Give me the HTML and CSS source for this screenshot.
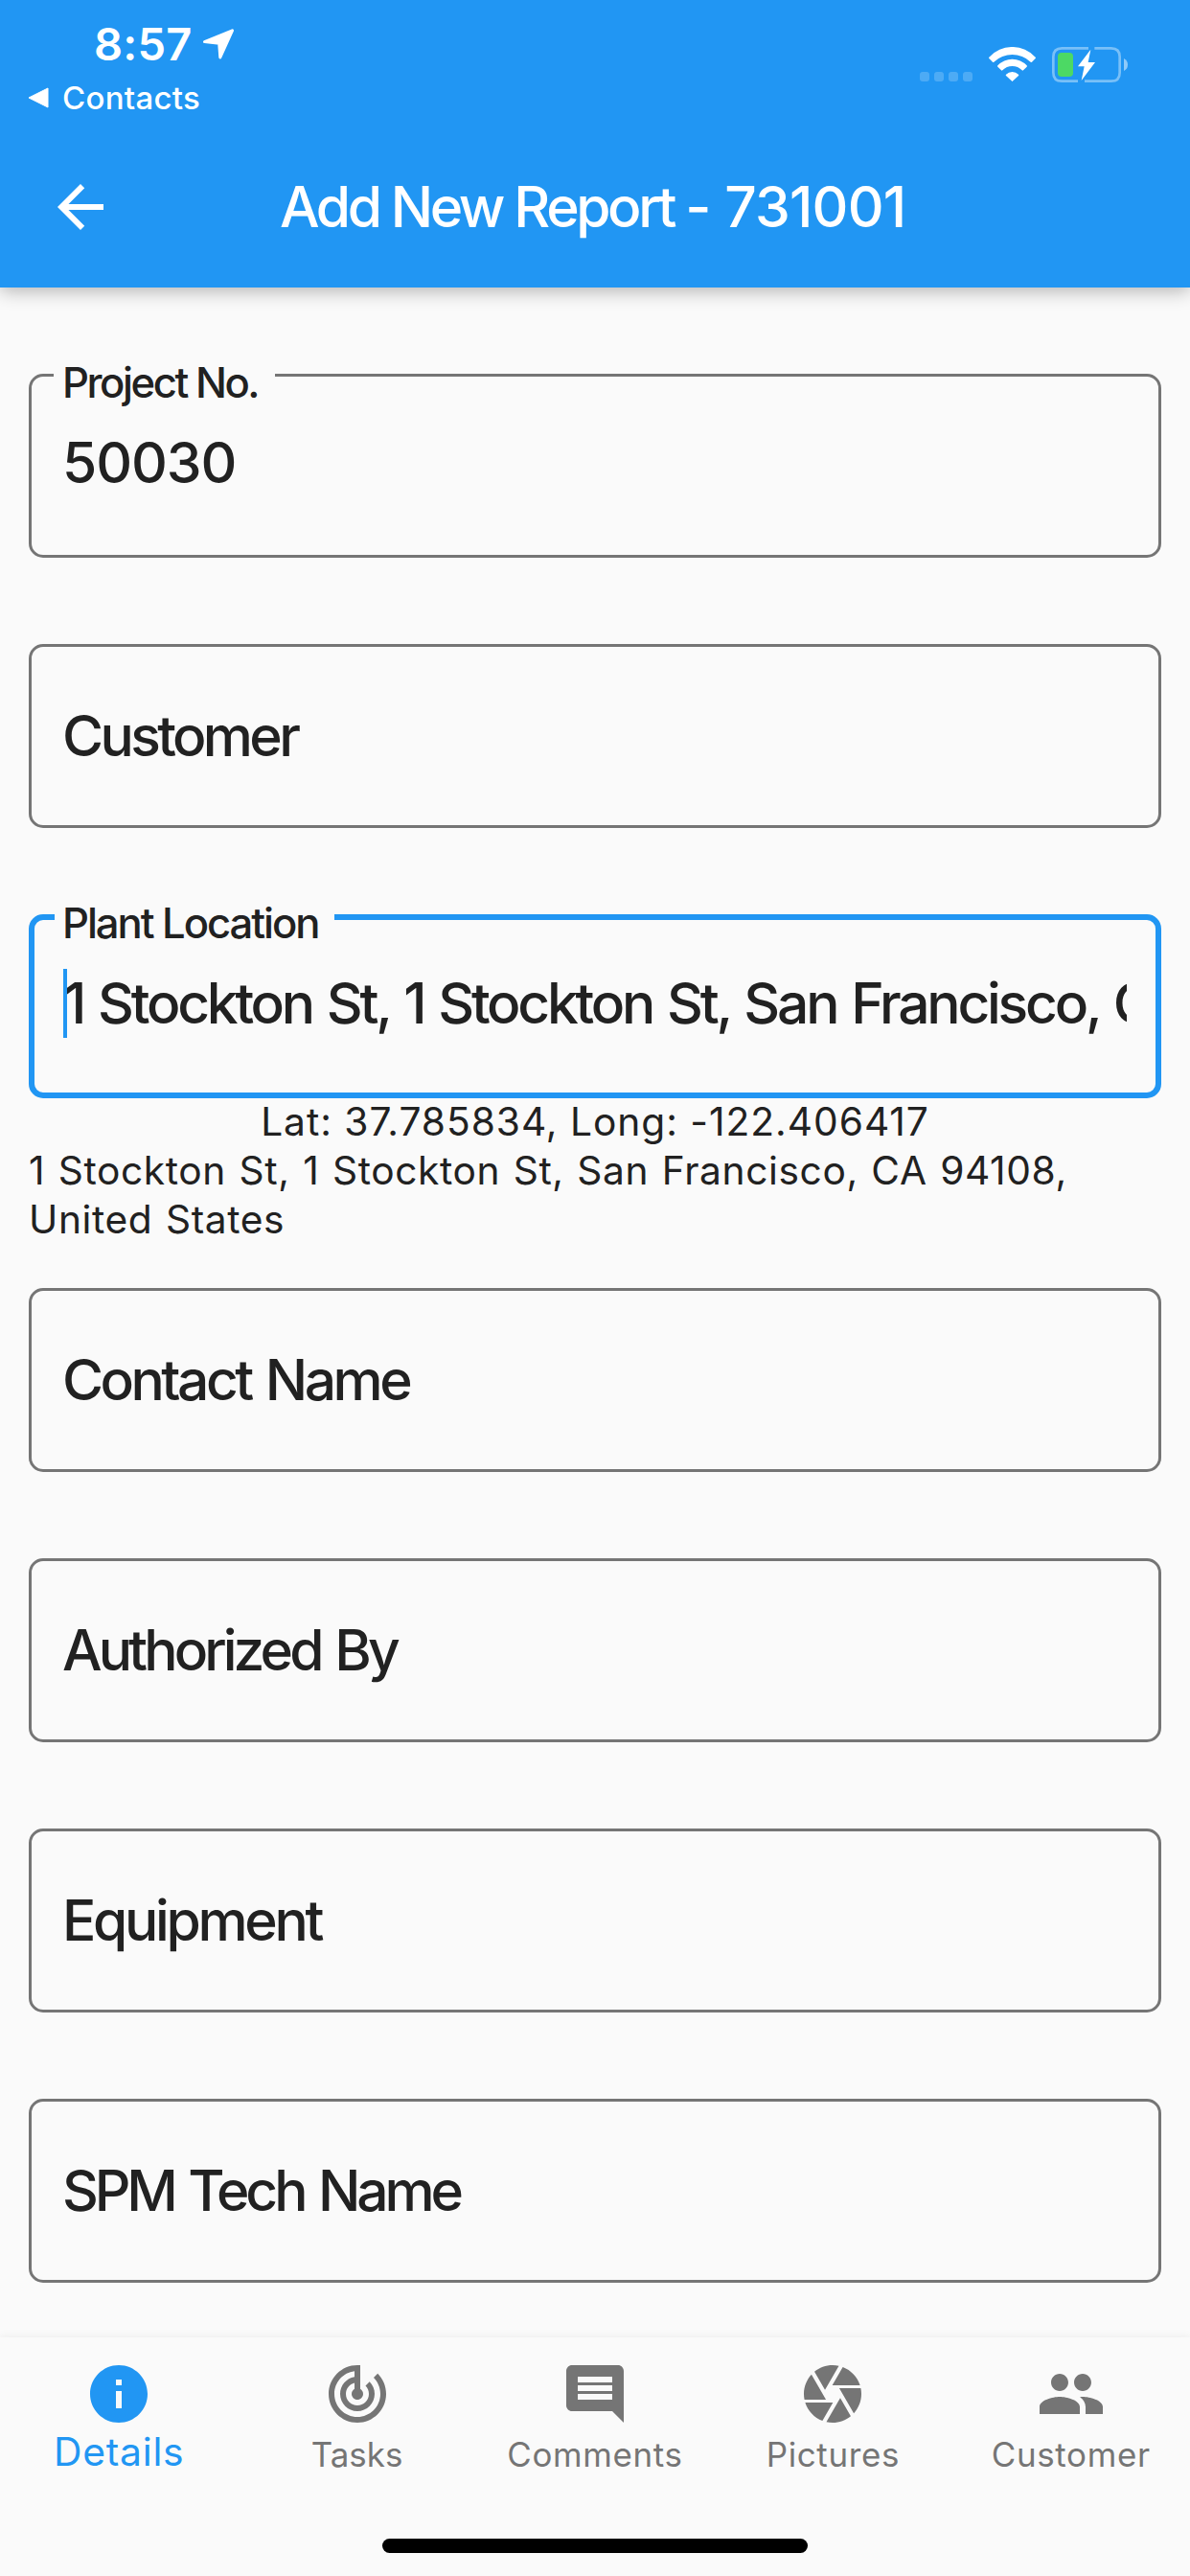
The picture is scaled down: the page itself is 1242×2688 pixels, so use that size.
FILE: index.html
```html
<!DOCTYPE html>
<html lang="en">
<head>
<meta charset="utf-8">
<title>Add New Report</title>
<link rel="stylesheet" href="styles.css">
</head>
<body>
<header class="header">
  <div class="status">
    <div class="status-left">
      <div class="clock">
        <span class="time">8:57</span>
        <svg class="location-arrow" viewBox="0 0 32 32"><path d="M1.5 13.6L30.5 1.8L17.8 30L16.7 15.2Z"/></svg>
      </div>
      <div class="return">
        <svg class="return-arrow" viewBox="0 0 22 22"><path d="M1 11L21 1V21Z"/></svg>
        <span class="return-app">Contacts</span>
      </div>
    </div>
    <div class="status-right">
      <div class="signal"><i class="dot"></i><i class="dot"></i><i class="dot"></i><i class="dot"></i></div>
      <svg class="wifi" viewBox="0 0 147 108">
        <path d="M1 32A98 98 0 0 1 146 32Q148 34 146 36L135 47Q133 49 131 47A84 84 0 0 0 16 47Q14 49 12 47L1 36Q-1 34 1 32Z"/>
        <path d="M28 58A62 62 0 0 1 119 58Q121 60 119 62L108 73Q106 75 104 73A43 43 0 0 0 43 73Q41 75 39 73L28 62Q26 60 28 58Z"/>
        <path d="M54 86A27 27 0 0 1 93 86Q95 88 93 90L73.5 108L54 90Q52 88 54 86Z"/>
      </svg>
      <svg class="battery" viewBox="0 0 237 111">
        <path class="battery-shell" d="M114 4H31Q4 4 4 31V80Q4 107 31 107H81M133 4H185Q212 4 212 31V80Q212 107 185 107H102"/>
        <path class="battery-cap" d="M225 36Q237 42 237 55.500T225 75Z"/>
        <rect class="battery-level" x="18" y="18" width="48" height="75" rx="12"/>
        <path class="battery-bolt" d="M121 8L81 61H101L92 105L135 48H113Z"/>
      </svg>
    </div>
  </div>
  <div class="toolbar">
    <svg class="icon back" viewBox="0 0 24 24"><path d="M20 11H7.830l5.590-5.590L12 4l-8 8 8 8 1.410-1.410L7.830 13H20v-2z"/></svg>
    <h1 class="title">Add New Report - <span class="report-number">731001</span></h1>
  </div>
</header>

<main class="form">
  <div class="field filled">
    <span class="float-label project">Project No.</span>
    <div class="value number">50030</div>
  </div>
  <div class="field"><span class="label customer">Customer</span></div>
  <div class="field filled focused">
    <span class="float-label plant">Plant Location</span>
    <div class="value address"><i class="caret"></i>1 Stockton St, 1 Stockton St, San Francisco, CA 94108, United States</div>
  </div>
  <div class="place">
    <p class="coords">Lat: 37.785834, Long: -122.406417</p>
    <p class="street">1 Stockton St, 1 Stockton St, San Francisco, CA 94108, United States</p>
  </div>
  <div class="field"><span class="label contact">Contact Name</span></div>
  <div class="field"><span class="label authorized">Authorized By</span></div>
  <div class="field"><span class="label equipment">Equipment</span></div>
  <div class="field"><span class="label tech">SPM Tech Name</span></div>
</main>

<nav class="bottom">
  <div class="tabs">
    <div class="tab active">
      <svg class="icon" viewBox="0 0 24 24"><path d="M12 2C6.480 2 2 6.480 2 12s4.480 10 10 10 10-4.480 10-10S17.520 2 12 2zm1 15h-2v-6h2v6zm0-8h-2V7h2v2z"/></svg>
      <span>Details</span>
    </div>
    <div class="tab">
      <svg class="icon" viewBox="0 0 24 24"><path d="M19.070 4.930l-1.410 1.410C19.100 7.790 20 9.790 20 12c0 4.420-3.580 8-8 8s-8-3.580-8-8c0-4.080 3.050-7.440 7-7.930v2.020C8.160 6.570 6 9.030 6 12c0 3.310 2.690 6 6 6s6-2.690 6-6c0-1.660-.67-3.160-1.760-4.240l-1.410 1.410C15.550 9.900 16 10.900 16 12c0 2.210-1.790 4-4 4s-4-1.790-4-4c0-1.860 1.280-3.410 3-3.860v2.140c-.6.35-1 .98-1 1.720 0 1.100.9 2 2 2s2-.9 2-2c0-.74-.4-1.380-1-1.720V2h-1C6.480 2 2 6.480 2 12s4.480 10 10 10 10-4.480 10-10c0-2.760-1.120-5.260-2.930-7.070z"/></svg>
      <span class="tasks">Tasks</span>
    </div>
    <div class="tab">
      <svg class="icon" viewBox="0 0 24 24"><path d="M21.990 4c0-1.100-.89-2-1.990-2H4c-1.100 0-2 .9-2 2v12c0 1.100.9 2 2 2h14l4 4-.01-18zM18 14H6v-2h12v2zm0-3H6V9h12v2zm0-3H6V6h12v2z"/></svg>
      <span>Comments</span>
    </div>
    <div class="tab">
      <svg class="icon" viewBox="0 0 24 24"><path d="M9.400 10.500l4.770-8.260C13.470 2.090 12.750 2 12 2c-2.400 0-4.600.85-6.320 2.250l3.660 6.350.06-.1zM21.540 9c-.92-2.920-3.150-5.260-6-6.340L11.880 9h9.660zm.26 1h-7.490l.29.5 4.760 8.250C20.980 16.940 22 14.590 22 12c0-.69-.07-1.350-.2-2zM8.540 12l-3.900-6.750C3.010 7.030 2 9.390 2 12c0 .69.07 1.350.2 2h7.490l-1.150-2zm-6.080 3c.92 2.920 3.150 5.260 6 6.340L12.120 15H2.460zm11.270 0l-3.900 6.760c.7.15 1.420.24 2.170.24 2.400 0 4.600-.85 6.320-2.250l-3.660-6.350-.93 1.600z"/></svg>
      <span>Pictures</span>
    </div>
    <div class="tab">
      <svg class="icon" viewBox="0 0 24 24"><path d="M16 11c1.660 0 2.990-1.340 2.990-3S17.660 5 16 5c-1.660 0-3 1.340-3 3s1.340 3 3 3zm-8 0c1.660 0 2.990-1.340 2.990-3S9.660 5 8 5C6.340 5 5 6.340 5 8s1.340 3 3 3zm0 2c-2.330 0-7 1.170-7 3.500V19h14v-2.500c0-2.330-4.670-3.500-7-3.500zm8 0c-.29 0-.62.02-.97.05 1.160.84 1.970 1.970 1.970 3.450V19h6v-2.500c0-2.330-4.670-3.500-7-3.500z"/></svg>
      <span>Customer</span>
    </div>
  </div>
  <div class="home-indicator"></div>
</nav>
</body>
</html>
```
FILE: styles.css
```css
* {
  box-sizing: border-box;
}

body {
  margin: 0;
  height: 2688px;
  display: flex;
  flex-direction: column;
  overflow: hidden;
  background: #fafafa;
  color: #212121;
  font-family: Inter, "Liberation Sans", sans-serif;
}

svg {
  display: block;
  flex: none;
}

.icon {
  width: 72px;
  height: 72px;
  fill: currentColor;
}

/* Header */
.header {
  height: 300px;
  flex: none;
  background: #2196f3;
  color: #fff;
  box-shadow: 0 4px 18px rgba(0, 0, 0, 0.28);
}

.status {
  height: 132px;
  display: flex;
  justify-content: space-between;
  padding: 18px 65px 0 29px;
}

.clock {
  height: 56px;
  display: flex;
  padding: 0 0 0 69px;
}

.time {
  width: 114px;
  font-size: 47px;
  font-weight: 600;
  line-height: 56px;
  letter-spacing: 0.22px;
}

.location-arrow {
  width: 32px;
  height: 32px;
  margin-top: 12px;
  fill: #fff;
  stroke: #fff;
  stroke-width: 3;
  stroke-linejoin: round;
}

.return {
  display: flex;
  align-items: center;
  gap: 14px;
  margin-top: 8px;
}

.return-arrow {
  width: 22px;
  height: 22px;
  fill: #fff;
  stroke: #fff;
  stroke-width: 1;
  stroke-linejoin: round;
}

.return-app {
  font-size: 33px;
  font-weight: 500;
  line-height: 40px;
  letter-spacing: 0.27px;
}

.status-right {
  height: 68px;
  display: flex;
  align-items: flex-end;
  gap: 17px;
}

.signal {
  display: flex;
  gap: 5px;
  padding-bottom: 1px;
}

.dot {
  width: 10px;
  height: 10px;
  border-radius: 3px;
  background: rgba(255, 255, 255, 0.2);
}

.wifi {
  width: 49px;
  height: 36px;
  margin-bottom: 1px;
  fill: #fff;
}

.battery {
  width: 79px;
  height: 37px;
}

.battery-shell {
  fill: none;
  stroke: rgba(255, 255, 255, 0.4);
  stroke-width: 8;
}

.battery-cap {
  fill: rgba(255, 255, 255, 0.5);
}

.battery-level {
  fill: #4cd964;
}

.battery-bolt {
  fill: #fff;
}

.toolbar {
  height: 168px;
  display: flex;
  align-items: center;
  padding-left: 48px;
}

.title {
  margin: 0 0 0 172px;
  font-size: 58.7px;
  font-weight: 500;
  line-height: 72px;
  letter-spacing: -3.4px;
  white-space: nowrap;
}

.report-number {
  margin-left: 5px;
  letter-spacing: -0.8px;
}

/* Form */
.form {
  flex: 1;
  display: flex;
  flex-direction: column;
  gap: 90px;
  padding: 90px 30px 0;
}

.field {
  position: relative;
  height: 192px;
  flex: none;
  display: flex;
  align-items: center;
  padding: 0 32px;
  border: 3px solid #757575;
  border-radius: 15px;
}

.filled {
  align-items: flex-start;
  padding-top: 54px;
}

.focused {
  padding: 51px 30px 0;
  border: 6px solid #2196f3;
}

.label,
.value {
  font-size: 58.7px;
  font-weight: 500;
  line-height: 72px;
  white-space: nowrap;
}

.label {
  word-spacing: 3px;
}

.value {
  position: relative;
  flex: 1;
  min-width: 0;
  overflow: hidden;
}

.number {
  letter-spacing: -1.1px;
}

.address {
  letter-spacing: -3.22px;
  word-spacing: 2.5px;
}

.customer {
  letter-spacing: -3.6px;
}

.contact {
  letter-spacing: -3.5px;
}

.authorized {
  letter-spacing: -3.9px;
}

.equipment {
  letter-spacing: -3.3px;
}

.tech {
  letter-spacing: -4.1px;
}

.caret {
  position: absolute;
  left: 0;
  top: 0;
  width: 4px;
  height: 72px;
  background: #2196f3;
}

.float-label {
  position: absolute;
  top: -20px;
  left: 23px;
  padding-left: 9px;
  background: #fafafa;
  font-size: 43.6px;
  font-weight: 500;
  line-height: 54px;
  white-space: nowrap;
}

.project {
  width: 231px;
  letter-spacing: -2.45px;
}

.plant {
  top: -23px;
  left: 21px;
  width: 292px;
  padding-left: 8px;
  letter-spacing: -2.05px;
}

.place {
  margin: -91px 0 -44px;
  font-size: 40.7px;
  line-height: 51px;
}

.coords,
.street {
  margin: 0;
}

.coords {
  text-align: center;
  letter-spacing: 0.97px;
}

.street {
  letter-spacing: 0.6px;
  word-spacing: 1.6px;
}

/* Bottom navigation */
.bottom {
  height: 249px;
  flex: none;
  background: #fafafa;
  box-shadow: 0 -1px 9px rgba(0, 0, 0, 0.06);
}

.tabs {
  height: 210px;
  display: grid;
  grid-template-columns: repeat(5, 1fr);
  padding-top: 23px;
}

.tab {
  display: flex;
  flex-direction: column;
  align-items: center;
  gap: 3px;
  color: #757575;
  font-size: 34.9px;
  line-height: 48px;
  letter-spacing: 0.67px;
}

.tab.active {
  gap: 0;
  color: #2196f3;
  font-size: 40.8px;
  letter-spacing: 0.76px;
}

.tasks {
  letter-spacing: 0;
}

.home-indicator {
  width: 444px;
  height: 15px;
  margin: 0 auto;
  border-radius: 8px;
  background: #000;
}
```
